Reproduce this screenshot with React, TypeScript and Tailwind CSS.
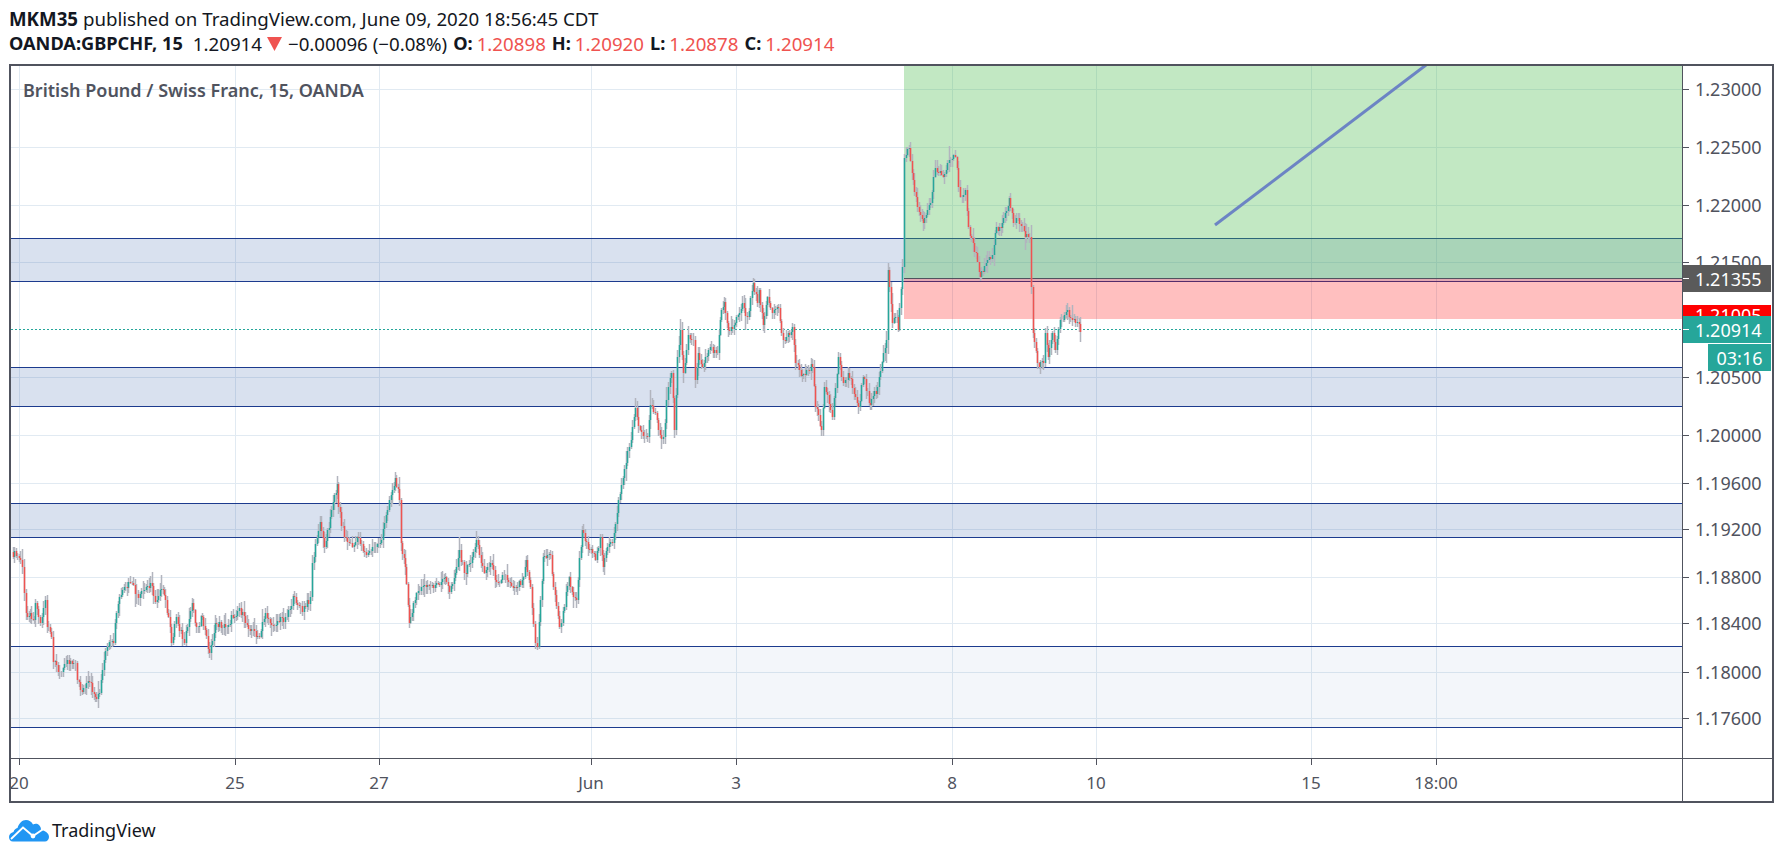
import React from 'react';

// hand read turning points of the price line, in page pixels
const POINTS: [number, number][] = [
  [11, 552], [20, 560], [22, 567], [24, 593], [26, 613], [30, 613], [34, 620], [35, 603], [40, 623], [45, 600],
  [47, 627], [51, 637], [53, 662], [61, 672], [67, 660], [75, 663], [77, 680], [82, 692], [89, 682], [95, 697],
  [99, 693], [102, 670], [107, 647], [113, 643], [115, 623], [119, 597], [130, 583], [138, 598], [150, 583], [155, 602],
  [160, 590], [164, 595], [168, 617], [171, 643], [176, 617], [184, 643], [192, 603], [196, 627], [202, 617], [209, 653],
  [215, 623], [225, 627], [239, 608], [245, 623], [259, 637], [265, 613], [271, 625], [285, 617], [294, 597], [302, 612],
  [310, 597], [312, 563], [320, 522], [324, 547], [330, 517], [337, 484], [338, 507], [344, 537], [352, 547], [358, 538],
  [366, 555], [381, 540], [389, 500], [395, 478], [399, 500], [401, 543], [405, 567], [409, 623], [413, 603], [421, 587],
  [439, 585], [445, 577], [449, 592], [455, 573], [459, 550], [464, 573], [470, 563], [476, 540], [484, 573], [490, 563],
  [496, 582], [504, 575], [514, 587], [522, 580], [526, 560], [530, 587], [535, 643], [537, 647], [543, 557], [550, 555],
  [553, 587], [559, 627], [561, 623], [569, 577], [573, 597], [576, 600], [579, 558], [582, 530], [589, 550], [595, 560],
  [600, 537], [603, 567], [607, 547], [612, 543], [618, 500], [629, 447], [635, 408], [640, 430], [647, 437], [650, 405],
  [655, 413], [658, 430], [663, 437], [668, 387], [671, 373], [674, 430], [677, 357], [680, 330], [683, 373], [688, 335],
  [693, 340], [695, 380], [698, 353], [702, 367], [710, 347], [717, 353], [720, 320], [724, 302], [728, 330], [735, 323],
  [742, 303], [747, 317], [753, 283], [757, 303], [759, 290], [763, 325], [767, 297], [772, 313], [778, 308], [783, 340],
  [792, 327], [795, 363], [802, 375], [812, 367], [815, 407], [821, 430], [824, 387], [832, 417], [838, 357], [843, 383],
  [848, 373], [858, 407], [863, 377], [870, 405], [877, 387], [883, 353], [886, 340], [888, 270], [892, 323], [897, 317],
  [898, 330], [902, 267], [904, 158], [909, 148], [913, 180], [917, 207], [923, 223], [930, 203], [935, 168], [943, 177],
  [950, 160], [955, 157], [960, 197], [965, 190], [968, 227], [973, 243], [980, 277], [987, 260], [992, 255], [995, 233],
  [1002, 223], [1009, 198], [1013, 223], [1018, 218], [1025, 237], [1029, 237], [1031, 287], [1033, 333], [1037, 363], [1043, 363],
  [1045, 333], [1048, 357], [1052, 333], [1055, 350], [1060, 320], [1067, 310], [1072, 320], [1077, 322], [1080, 332],
];

const noise = (i: number) => {
  const v = Math.sin(i * 12.9898) * 43758.5453;
  return v - Math.floor(v);
};

// turn the points into stepped candles: grey wicks, coloured bodies
const buildCandles = () => {
  let wicks = '';
  let up = '';
  let down = '';
  let prev = POINTS[0][1];
  let n = 0;
  for (let s = 1; s < POINTS.length; s++) {
    const [x0, y0] = POINTS[s - 1];
    const [x1, y1] = POINTS[s];
    const steps = Math.max(1, Math.round((x1 - x0) / 1.5));
    for (let k = 1; k <= steps; k++) {
      n++;
      const x = Math.round(x0 + ((x1 - x0) * k) / steps) + 0.5;
      const jitter = k === steps ? 0 : (noise(n) - 0.5) * 8;
      const y = Math.round(y0 + ((y1 - y0) * k) / steps + jitter);
      const spike = noise(n + 1300) > 0.88 ? 8 : 0;
      const top = Math.round(Math.min(prev, y) - noise(n + 500) * 7 - 1 - spike * noise(n + 40));
      const bottom = Math.round(Math.max(prev, y) + noise(n + 900) * 7 + 1 + spike * noise(n + 80));
      wicks += `M${x} ${top}V${bottom}`;
      const seg = `M${x} ${prev}V${y}`;
      if (y <= prev) up += seg;
      else down += seg;
      prev = y;
    }
  }
  return { wicks, up, down };
};

const candles = buildCandles();

const PRICE_TICKS: [string, number][] = [
  ['1.23000', 89], ['1.22500', 147], ['1.22000', 205], ['1.21500', 262], ['1.20500', 377], ['1.20000', 435],
  ['1.19600', 483], ['1.19200', 529], ['1.18800', 577], ['1.18400', 623], ['1.18000', 672], ['1.17600', 718],
];

const TIME_TICKS: [string, number][] = [
  ['20', 19], ['25', 235], ['27', 379], ['Jun', 591], ['3', 736], ['8', 952], ['10', 1096], ['15', 1311], ['18:00', 1436],
];

const BANDS: [number, number, number][] = [
  [238, 281, 0.17],
  [367, 406, 0.17],
  [503, 537, 0.17],
  [646, 727, 0.05],
];

const ChartPlot = () => (
  <svg viewBox="11 66 1671 692" className="block w-[1671px] h-[692px] shrink-0">
    {PRICE_TICKS.map(([label, y]) => (
      <line key={label} x1={11} x2={1682} y1={y + 0.5} y2={y + 0.5} stroke="#e1eaf2" strokeWidth={1} />
    ))}
    {TIME_TICKS.map(([label, x]) => (
      <line key={label} x1={x + 0.5} x2={x + 0.5} y1={66} y2={758} stroke="#e1eaf2" strokeWidth={1} />
    ))}
    {BANDS.map(([y0, y1, alpha]) => (
      <g key={y0}>
        <rect x={11} y={y0} width={1671} height={y1 - y0} fill="#1c4f9e" opacity={alpha} />
        <line x1={11} x2={1682} y1={y0 + 0.5} y2={y0 + 0.5} stroke="#1c3b8e" />
        <line x1={11} x2={1682} y1={y1 + 0.5} y2={y1 + 0.5} stroke="#1c3b8e" />
      </g>
    ))}
    <rect x={904} y={66} width={778} height={212} fill="#4cbb50" opacity={0.34} />
    <rect x={904} y={278} width={778} height={41} fill="#ff0000" opacity={0.25} />
    <line x1={904} x2={1682} y1={278.5} y2={278.5} stroke="#50535e" />
    <line x1={1215} y1={225} x2={1426} y2={65} stroke="#6c84c4" strokeWidth={3} />
    <line x1={11} x2={1682} y1={329.5} y2={329.5} stroke="#26a69a" strokeDasharray="2 2" />
    <path d={candles.wicks} stroke="#b2b5be" strokeWidth={1.5} fill="none" />
    <path d={candles.up} stroke="#26a69a" strokeWidth={1.5} fill="none" />
    <path d={candles.down} stroke="#ef5350" strokeWidth={1.5} fill="none" />
  </svg>
);

const PriceAxis = () => (
  <div className="relative w-[89px] h-[692px] border-l border-[#50535e] text-[18px] leading-none text-[#50535e] overflow-hidden">
    {PRICE_TICKS.map(([label, y]) => (
      <div key={label} className="absolute left-0 flex items-center h-5 -mt-2.5" style={{ top: y - 66 }}>
        <span className="w-1.5 h-px bg-[#50535e]" />
        <span className="ml-1.5">{label}</span>
      </div>
    ))}
    <div className="absolute left-0 top-[239px] w-full h-3 bg-[#ff0000] pl-3 pt-px text-white">1.21005</div>
    <div className="absolute left-0 top-[199px] w-full h-[27px] bg-[#5a5a5a] text-white flex items-center">
      <span className="w-1.5 h-px bg-white" />
      <span className="ml-1.5">1.21355</span>
    </div>
    <div className="absolute left-0 top-[250px] w-full h-[27px] bg-[#26a69a] text-white flex items-center">
      <span className="w-1.5 h-px bg-white" />
      <span className="ml-1.5">1.20914</span>
    </div>
    <div className="absolute right-0 top-[278px] w-[63px] h-[27px] bg-[#26a69a] text-white flex items-center justify-center">
      03:16
    </div>
  </div>
);

const TimeAxis = () => (
  <div className="relative h-[43px] border-t border-[#50535e] text-[17px] leading-none text-[#50535e] overflow-hidden">
    {TIME_TICKS.map(([label, x]) => (
      <div
        key={label}
        className="absolute top-0 w-16 -ml-8 flex flex-col items-center"
        style={{ left: x - 11 }}
      >
        <span className="w-px h-1.5 bg-[#50535e]" />
        <span className="mt-[9px]">{label}</span>
      </div>
    ))}
    <span className="absolute top-0 bottom-0 left-[1671px] w-px bg-[#50535e]" />
  </div>
);

const Logo = () => (
  <svg viewBox="0 0 40 22" className="w-10 h-[22px]">
    <path
      d="M4 21.5C1.5 21.5 0 19.5 0 17C0 14.5 2 12.5 4.5 12C5 10 6.5 8.5 8.5 8C10 3.5 13 0 17 0C20 0 22.5 1.5 24 4.5C26 3.5 28.5 3.5 30 5C31.5 6.5 32 8 32 10C36 10.5 40 13 40 17C40 19.5 38 21.5 36 21.5Z"
      fill="#2196f3"
    />
    <path d="M2 19L14 7.5L24 16L38 6.5" fill="none" stroke="#fff" strokeWidth={1.8} />
    <circle cx={24} cy={16} r={2.4} fill="#fff" />
  </svg>
);

const Value = ({ label, value }: { label: string; value: string }) => (
  <span className="flex gap-1">
    <span className="font-bold text-[18.2px]">{label}</span>
    <span className="text-[#ef5350]">{value}</span>
  </span>
);

export default function App() {
  return (
    <div className="w-[1783px] h-[857px] bg-white overflow-hidden font-['Noto_Sans','Open_Sans',sans-serif] text-[#131722]">
      <div className="h-16 pl-[9px] pt-[6px] text-[18.7px] leading-[25px]">
        <div>
          <span className="font-bold">MKM35</span> published on TradingView.com, June 09, 2020 18:56:45 CDT
        </div>
        <div className="flex items-center">
          <span className="font-bold text-[18.2px]">OANDA:GBPCHF, 15</span>
          <span className="ml-2.5">1.20914</span>
          <svg viewBox="0 0 15 14" className="w-[15px] h-3.5 ml-[5px]">
            <path d="M0 0H15L7.5 14Z" fill="#ef5350" />
          </svg>
          <span className="ml-1.5">−0.00096 (−0.08%)</span>
          <div className="flex gap-1.5 ml-1.5">
            <Value label="O:" value="1.20898" />
            <Value label="H:" value="1.20920" />
            <Value label="L:" value="1.20878" />
            <Value label="C:" value="1.20914" />
          </div>
        </div>
      </div>
      <div className="relative ml-[9px] w-[1765px] h-[739px] border-2 border-[#50535e]">
        <div className="flex">
          <ChartPlot />
          <PriceAxis />
        </div>
        <TimeAxis />
        <div className="absolute left-3 top-[13px] text-[18px] font-semibold leading-[22px] text-[#50535e]">
          British Pound / Swiss Franc, 15, OANDA
        </div>
      </div>
      <div className="flex items-center pl-[9px] pt-4">
        <Logo />
        <span className="ml-[3px] text-lg leading-[23px]">TradingView</span>
      </div>
    </div>
  );
}
